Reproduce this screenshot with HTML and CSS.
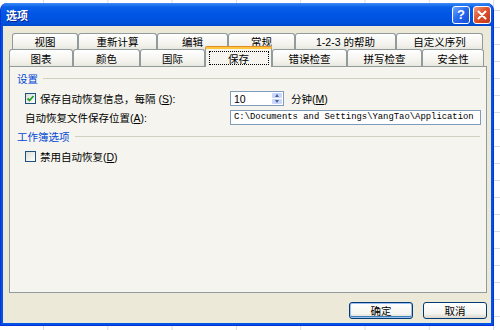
FILE: index.html
```html
<!DOCTYPE html>
<html lang="zh-CN">
<head>
  <meta charset="UTF-8">
  <title>选项</title>
  <link rel="stylesheet" href="styles.css">
</head>
<body>
  <div class="window">
    <!-- Title bar -->
    <div class="titlebar">
      <span class="title">选项</span>
      <div class="caption-buttons">
        <span class="cap-btn help">?</span>
        <span class="cap-btn close">
          <svg width="10" height="10" viewBox="0 0 10 10"><path d="M1.5 1.5 L8.5 8.5 M8.5 1.5 L1.5 8.5" stroke="#fff" stroke-width="2" stroke-linecap="round"/></svg>
        </span>
      </div>
    </div>

    <div class="dialog">
      <!-- Tabs -->
      <div class="tabs">
        <div class="tab-row back">
          <div class="tab">视图</div>
          <div class="tab">重新计算</div>
          <div class="tab">编辑</div>
          <div class="tab">常规</div>
          <div class="tab">1-2-3 的帮助</div>
          <div class="tab">自定义序列</div>
        </div>
        <div class="tab-row front">
          <div class="tab">图表</div>
          <div class="tab">颜色</div>
          <div class="tab">国际</div>
          <div class="tab selected"><span class="focus">保存</span></div>
          <div class="tab">错误检查</div>
          <div class="tab">拼写检查</div>
          <div class="tab">安全性</div>
        </div>
      </div>

      <!-- Tab page -->
      <div class="panel">
        <div class="group-title"><span>设置</span></div>
        <div class="field-row">
          <label class="check"><span class="box"><svg width="9" height="9" viewBox="0 0 9 9"><path d="M1.5 4.5 L3.5 6.5 L7.5 2" fill="none" stroke="#21a121" stroke-width="1.8"/></svg></span><span>保存自动恢复信息，每隔 (<u>S</u>):</span></label>
          <div class="spin-line">
            <div class="spin">
              <span class="spin-value">10</span>
              <span class="spin-arrows">
                <span class="arrow up"></span>
                <span class="arrow down"></span>
              </span>
            </div>
            <span>分钟(<u>M</u>)</span>
          </div>
        </div>
        <div class="field-row">
          <span class="label">自动恢复文件保存位置(<u>A</u>):</span>
          <div class="path-input">C:\Documents and Settings\YangTao\Application</div>
        </div>

        <div class="group-title second"><span>工作簿选项</span></div>
        <div class="field-row">
          <label class="check"><span class="box"></span><span>禁用自动恢复(<u>D</u>)</span></label>
        </div>
      </div>

      <!-- Buttons -->
      <div class="buttons">
        <button class="btn default">确定</button>
        <button class="btn">取消</button>
      </div>
    </div>
  </div>
</body>
</html>
```

FILE: styles.css
```css
/* Base reset */
* {
  margin: 0;
  padding: 0;
  box-sizing: border-box;
}
:root {
  --xp-blue: #0054e3;
  --face: #ece9d8;
  --page: #f5f4ee;
  --tab-border: #919b9c;
  --group-blue: #0046d5;
  --field-border: #7f9db9;
}
body {
  width: 500px;
  height: 330px;
  overflow: hidden;
  font-family: "Liberation Sans", "Noto Sans CJK SC", sans-serif;
  font-size: 10.5px;
  color: #000;
  background-color: #fff;
  background-image:
    linear-gradient(to right, #d6dbe4 1px, transparent 1px),
    linear-gradient(to bottom, #d6dbe4 1px, transparent 1px);
  background-size: 64.3px 17px;
  background-position: 43px 0, 0 10px;
  padding-top: 3px;
}

/* Window frame */
.window {
  width: 494px;
  height: 323px;
  background: var(--xp-blue);
  border-radius: 7px 7px 0 0;
  border: 1px solid #0831d9;
  border-top: none;
  display: flex;
  flex-direction: column;
}
.titlebar {
  height: 23px;
  display: flex;
  justify-content: space-between;
  align-items: center;
  padding: 0 2px 0 5px;
  border-radius: 7px 7px 0 0;
  background: linear-gradient(#3d8cf7 0%, #0a5fe8 18%, #0055e5 50%, #0052dc 85%, #0048cc 100%);
}
.title {
  color: #fff;
  font-weight: bold;
  font-size: 11px;
  text-shadow: 1px 1px 0 #0a1e8c;
}
.caption-buttons {
  display: flex;
  gap: 3px;
}
.cap-btn {
  width: 18px;
  height: 18px;
  border: 1px solid #fff;
  border-radius: 3px;
  display: flex;
  align-items: center;
  justify-content: center;
  color: #fff;
  font-weight: bold;
  font-size: 13px;
}
.help {
  background: linear-gradient(135deg, #6fa6ff 0%, #2a6cf0 45%, #1550d8 100%);
}
.close {
  background: linear-gradient(135deg, #f19b7c 0%, #e0502c 45%, #c2391a 100%);
}

/* Dialog face */
.dialog {
  flex: 1;
  background: var(--face);
  margin: 0 2px 2px 2px;
  display: flex;
  flex-direction: column;
  padding: 7px 4px 0 6px;
}

/* Tabs */
.tab-row {
  display: flex;
  align-items: flex-end;
}
.tab-row.back {
  height: 16px;
  padding-left: 3px;
}
.tab-row.front {
  height: 17px;
}
.tab {
  height: 100%;
  display: flex;
  align-items: center;
  justify-content: center;
  border: 1px solid var(--tab-border);
  border-bottom: none;
  border-radius: 3px 3px 0 0;
  background: linear-gradient(#ffffff, #f3f2ec 70%, #e8e7df);
  white-space: nowrap;
}
.back .tab:nth-child(1) { width: 66px; }
.back .tab:nth-child(2) { width: 79px; }
.back .tab:nth-child(3) { width: 71px; }
.back .tab:nth-child(4) { width: 67px; }
.back .tab:nth-child(5) { width: 101px; }
.back .tab:nth-child(6) { width: 87px; }
.front .tab:nth-child(1) { width: 64px; }
.front .tab:nth-child(2) { width: 67px; }
.front .tab:nth-child(3) { width: 65px; }
.front .tab:nth-child(4) { width: 67px; }
.front .tab:nth-child(5) { width: 75px; }
.front .tab:nth-child(6) { width: 75px; }
.front .tab:nth-child(7) { width: 62px; }
.tab.selected {
  height: 20px;
  margin-top: -2px;
  margin-bottom: -1px;
  position: relative;
  z-index: 1;
  background: var(--page);
  border-top: 2px solid #ffc83c;
  box-shadow: 0 -1px 0 #e68b2c;
  border-radius: 2px 2px 0 0;
}
.focus {
  display: flex;
  align-items: center;
  justify-content: center;
  width: 60px;
  height: 14px;
  border: 1px dotted #000;
}

/* Tab page */
.panel {
  height: 227px;
  border: 1px solid var(--tab-border);
  background: var(--page);
  padding: 4px 6px 0 7px;
}
.group-title {
  display: flex;
  align-items: center;
  height: 14px;
  color: var(--group-blue);
}
.group-title::after {
  content: "";
  flex: 1;
  height: 1px;
  margin-left: 5px;
  background: #d0d0bf;
}
.group-title.second {
  margin-top: 4px;
}
.field-row {
  display: grid;
  grid-template-columns: 205px 1fr;
  align-items: center;
  height: 15px;
  margin-top: 4px;
  padding-left: 8px;
}
.group-title + .field-row {
  margin-top: 6px;
}
.check {
  display: flex;
  align-items: center;
  gap: 4px;
}
.box {
  width: 11px;
  height: 11px;
  border: 1px solid #1c5180;
  background: linear-gradient(135deg, #dcdcd7, #ffffff);
  display: flex;
  align-items: center;
  justify-content: center;
}

/* Spin box */
.spin-line {
  display: flex;
  align-items: center;
  gap: 7px;
}
.spin {
  width: 54px;
  height: 15px;
  border: 1px solid var(--field-border);
  background: #fff;
  display: flex;
  justify-content: space-between;
  padding: 1px 1px 1px 3px;
}
.spin-value {
  line-height: 12px;
}
.spin-arrows {
  width: 10px;
  display: flex;
  flex-direction: column;
  gap: 1px;
}
.arrow {
  flex: 1;
  background: #c8d7fb;
  border-radius: 1px;
  display: flex;
  align-items: center;
  justify-content: center;
}
.arrow::before {
  content: "";
  border-left: 2.5px solid transparent;
  border-right: 2.5px solid transparent;
}
.arrow.up::before {
  border-bottom: 3px solid #4d6185;
}
.arrow.down::before {
  border-top: 3px solid #4d6185;
}

.path-input {
  width: 251px;
  height: 15px;
  border: 1px solid var(--field-border);
  background: #fff;
  font-family: "Liberation Mono", monospace;
  font-size: 8.9px;
  line-height: 13px;
  padding-left: 3px;
  white-space: nowrap;
  overflow: hidden;
}

/* Bottom buttons */
.buttons {
  display: flex;
  justify-content: flex-end;
  gap: 10px;
  margin-top: 9px;
}
.btn {
  width: 64px;
  height: 17px;
  border: 1px solid #003c74;
  border-radius: 3px;
  background: linear-gradient(#ffffff, #f4f4f0 70%, #dcd7cb);
  font-family: inherit;
  font-size: 10.5px;
  color: #000;
}
.btn.default {
  box-shadow: inset 0 0 0 1px #9cbef5, inset 0 -1px 0 1px #3c7fb1;
}
```
